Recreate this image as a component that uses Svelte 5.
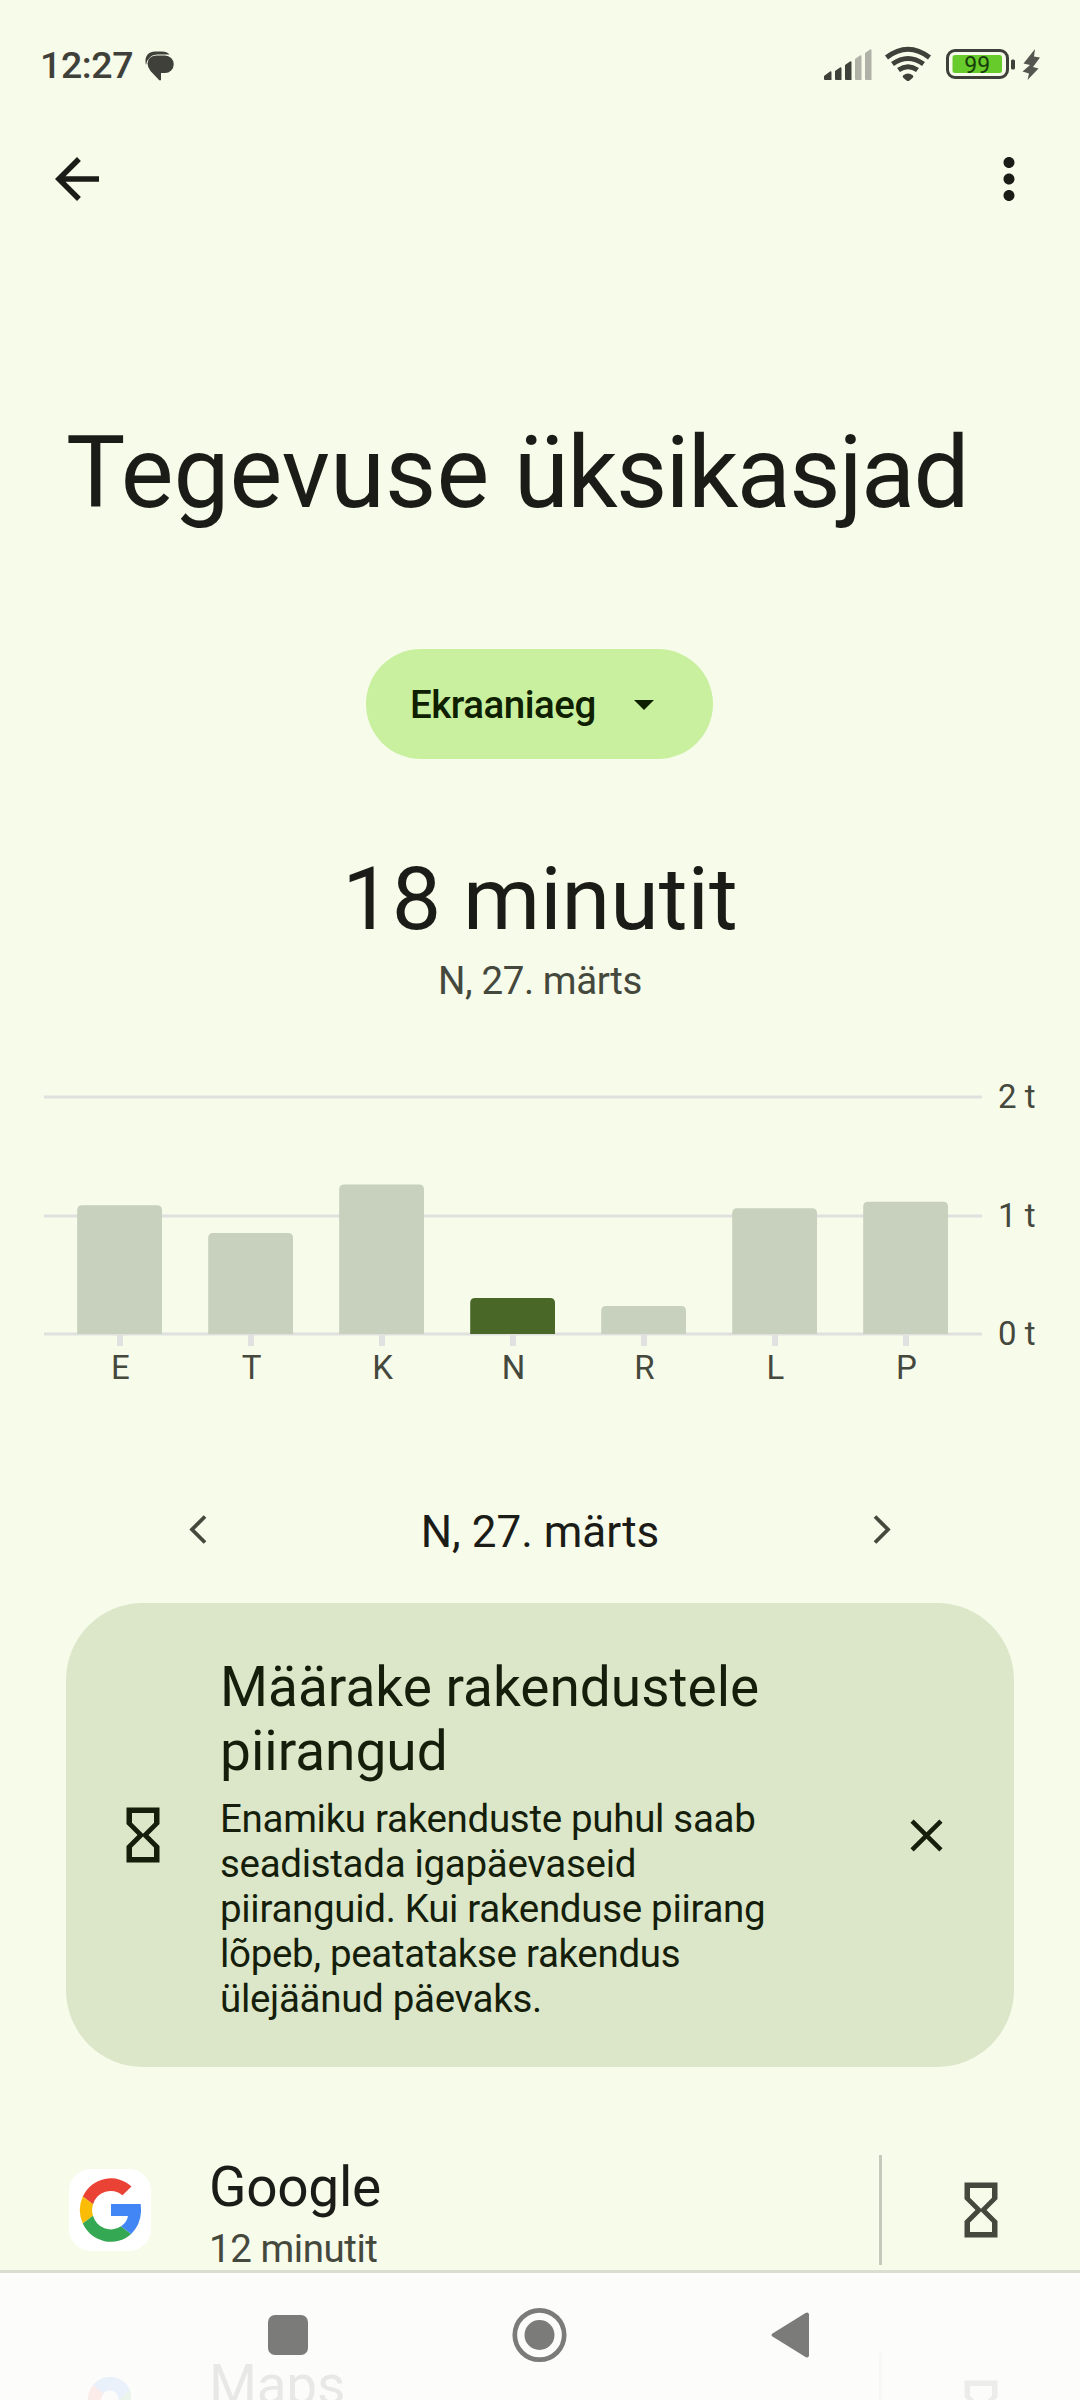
<script>
  const days = [
    { label: 'E', minutes: 65 },
    { label: 'T', minutes: 51 },
    { label: 'K', minutes: 75.5 },
    { label: 'N', minutes: 18.2, active: true },
    { label: 'R', minutes: 14.1 },
    { label: 'L', minutes: 63.5 },
    { label: 'P', minutes: 66.8 }
  ];

  const gridLines = [
    { label: '2 t', y: 31 },
    { label: '1 t', y: 150 },
    { label: '0 t', y: 268 }
  ];

  const baseline = 268;
  const pxPerMinute = 1.98;

  function barPath(index, minutes) {
    const x = 33.2 + index * 131;
    const w = 84.8;
    const h = minutes * pxPerMinute;
    const r = 5;
    return `M${x} ${baseline}v${-(h - r)}q0 ${-r} ${r} ${-r}h${w - 2 * r}q${r} 0 ${r} ${r}v${h - r}z`;
  }

  const apps = [
    { name: 'Google', time: '12 minutit' },
    { name: 'Maps', time: '' }
  ];
</script>

{#snippet hourglass()}
  <svg class="hourglass" viewBox="0 0 24 24">
    <path d="M6 2v6h.01L6 8.01 10 12l-4 4 .01.01H6V22h12v-5.99h-.01L18 16l-4-4 4-3.99-.01-.01H18V2H6zm10 14.5V20H8v-3.5l4-4 4 4zm-4-5l-4-4V4h8v3.5l-4 4z" />
  </svg>
{/snippet}

<div class="screen">
  <!-- Status bar -->
  <header class="status-bar">
    <span class="clock">12:27</span>
    <svg class="chat" width="30" height="30" viewBox="0 0 30 30">
      <path d="M1 14C-1 6 3 .5 10 .5h7q5 0 7.500 3H12Q3 4 1 14z" />
      <path d="M11.500 4.500H20a8.700 8.700 0 0 1 0 17.500h-4v7q-1 .8-2 0L5.500 20Q2.500 16 2.500 12.500a9 8 0 0 1 9-8z" />
    </svg>
    <svg class="signals" width="222" height="36" viewBox="0 0 222 36">
      <path d="M0 30l6-4.500q1.500-.8 1.500 1V34H1q-1 0-1-1zM11 25l5-3.500q1.500-.8 1.500 1V34h-5.500q-1 0-1-1zM21 19l5-3.500q1.500-.8 1.500 1V34h-5.500q-1 0-1-1z" />
      <path class="dim" d="M31 13l5-3.500q1.500-.8 1.500 1V34h-5.500q-1 0-1-1zM41 7l5-3.500q1.500-.8 1.500 1V34h-5.500q-1 0-1-1z" />
      <g class="waves">
        <path d="M62.500 11.500Q84 -5 105.500 11.500" />
        <path d="M68.500 18Q84 7 99.500 18" />
        <path d="M74.500 24Q84 17.500 93.500 24" />
      </g>
      <path d="M79 29.500q5-4 10 0 1 1-.5 2.500l-3 2.500q-1.500 1-3 0l-3-2.500q-1.500-1.500-.5-2.500z" />
      <rect class="battery" x="123.500" y="4.500" width="60" height="27" rx="7.500" />
      <rect class="charge" x="128.500" y="9" width="49.500" height="18" rx="2.500" />
      <rect x="187" y="13.500" width="4" height="10" rx="1.500" />
      <text x="153.200" y="26.500">99</text>
      <path class="bolt" d="M211 3L199.500 17.500l6.500 1.500-7.500 6.500 6.500 2-1.500 6.500 11-11.500-5.500-1.500L216 11.500l-6-1z" />
    </svg>
  </header>

  <!-- App bar -->
  <nav class="app-bar">
    <svg viewBox="0 0 24 24"><path d="M20 11H7.830l5.590-5.590L12 4l-8 8 8 8 1.410-1.410L7.830 13H20v-2z" /></svg>
    <svg viewBox="0 0 24 24"><path d="M12 8c1.100 0 2-.9 2-2s-.9-2-2-2-2 .9-2 2 .9 2 2 2zm0 2c-1.100 0-2 .9-2 2s.9 2 2 2 2-.9 2-2-.9-2-2-2zm0 6c-1.100 0-2 .9-2 2s.9 2 2 2 2-.9 2-2-.9-2-2-2z" /></svg>
  </nav>

  <h1>Tegevuse <span>üksikasjad</span></h1>

  <button class="metric">
    Ekraaniaeg
    <svg width="48" height="48" viewBox="0 0 24 24"><path d="M7 10l5 5 5-5z" /></svg>
  </button>

  <div class="total">18 minutit</div>
  <div class="total-date">N, 27. märts</div>

  <!-- Weekly chart -->
  <svg class="chart" width="1036" height="330" viewBox="0 0 1036 330">
    {#each gridLines as line}
      <line x1="0" x2="938" y1={line.y} y2={line.y} />
      <text x="954" y={line.y + 11}>{line.label}</text>
    {/each}
    {#each days as day, i}
      <path class:active={day.active} d={barPath(i, day.minutes)} />
      <rect x={73 + i * 131} y="269" width="6" height="11" />
      <text class="day" x={76.5 + i * 131} y="313">{day.label}</text>
    {/each}
  </svg>

  <div class="date-nav">
    <svg viewBox="0 0 55 55"><path d="M34 14.500l-13 13 13 13" /></svg>
    <span>N, 27. märts</span>
    <svg viewBox="0 0 55 55"><path d="M21 14.500l13 13-13 13" /></svg>
  </div>

  <!-- Limits card -->
  <section class="card">
    {@render hourglass()}
    <div class="card-text">
      <h2>Määrake rakendustele piirangud</h2>
      <p>Enamiku rakenduste puhul saab seadistada igapäevaseid piiranguid. Kui rakenduse piirang lõpeb, peatatakse rakendus ülejäänud päevaks.</p>
    </div>
    <svg class="close" viewBox="0 0 24 24"><path d="M6.400 19L5 17.600l5.600-5.600L5 6.400 6.400 5l5.600 5.600L17.600 5 19 6.400 13.400 12l5.600 5.600-1.400 1.400-5.600-5.600z" /></svg>
  </section>

  <!-- App list -->
  {#each apps as app}
    <div class="app-row">
      <div class="app-icon">
        {#if app.name === 'Google'}
          <svg width="62" height="64" viewBox="0 0 62 64">
            <path fill="#ea4335" d="M52.500 8.500A31 32 0 0 0 3.800 18.500L14 26.200A18.500 19 0 0 1 43.500 17.300z" />
            <path fill="#fbbc05" d="M3.800 18.500a31 32 0 0 0 0 27L14 37.800a18.500 19 0 0 1 0-11.600z" />
            <path fill="#34a853" d="M3.800 45.500a31 32 0 0 0 48.400 10.500L42 48.200A18.500 19 0 0 1 14 37.800z" />
            <path fill="#4285f4" d="M32 26h29.600q2.500 18-9.400 30L42 48.200q6-4 7-10.200H32z" />
          </svg>
        {:else}
          <svg width="44" height="62" viewBox="0 0 44 62">
            <path fill="#1a73e8" d="M5 8A22 22 0 0 1 29 1L15 18z" />
            <path fill="#4285f4" d="M29 1A22 22 0 0 1 42 13L28 30 15 18z" />
            <path fill="#ea4335" d="M5 8l12 10-14 15A22 22 0 0 1 5 8z" />
            <path fill="#34a853" d="M42 13c6 18-14 26-18 45q-2 4-4 0L10 42z" />
            <path fill="#fbbc04" d="M3 33l14-10 12 5-17 18z" />
            <circle cx="22" cy="22" r="8.500" fill="#fff" />
          </svg>
        {/if}
      </div>
      <div class="app-info">
        <div class="app-name">{app.name}</div>
        <div class="app-time">{app.time}</div>
      </div>
      <div class="divider"></div>
      {@render hourglass()}
    </div>
  {/each}

  <!-- System navigation, drawn over the list -->
  <footer class="system-nav">
    <svg width="1080" height="127" viewBox="0 0 1080 127">
      <rect x="268" y="42" width="40" height="40" rx="7" />
      <circle class="ring" cx="539.500" cy="62" r="24.700" />
      <circle cx="539.500" cy="62" r="15" />
      <path d="M772.500 60.500l33-20.500q3-1.500 3.500 1.500v41q-.5 3-3.500 1.500l-33-20.500q-2-1.500 0-3z" />
    </svg>
  </footer>
</div>

<style>
  :global(body) {
    background: #f7fbea;
  }

  .screen {
    position: relative;
    width: 1080px;
    height: 2400px;
    overflow: hidden;
    display: flex;
    flex-direction: column;
    background: #f7fbea;
    color: #1b1c17;
    font-family: Roboto, sans-serif;
    font-size: 38.5px;
  }

  .screen > * {
    flex-shrink: 0;
  }

  svg {
    display: block;
    flex-shrink: 0;
  }

  /* Status bar */
  .status-bar {
    display: flex;
    align-items: flex-start;
    height: 146px;
    padding: 46px 34px 0 40px;
    box-sizing: border-box;
    color: #3f4039;
    fill: #3f4039;
  }

  .clock {
    margin-top: -1px;
    width: 95px;
    font-size: 37.5px;
    font-weight: 500;
    line-height: 40px;
    letter-spacing: -0.4px;
  }

  .chat {
    margin: 5px 0 0 10px;
  }

  .signals {
    margin-left: auto;
  }

  .dim {
    fill: #b0b2a8;
  }

  .waves {
    fill: none;
    stroke: #3f4039;
    stroke-width: 5;
  }

  .battery {
    fill: none;
    stroke: #3f4039;
    stroke-width: 3;
  }

  .charge {
    fill: #67cb2b;
  }

  .signals text {
    font-size: 23px;
    text-anchor: middle;
    fill: #193c0c;
  }

  .bolt {
    fill: #55564f;
  }

  /* App bar */
  .app-bar {
    display: flex;
    justify-content: space-between;
    padding: 0 38px 0 44px;
    fill: #1b1c17;
  }

  .app-bar svg {
    width: 66px;
    height: 66px;
  }

  h1 {
    margin: 201px 0 0 66px;
    font-size: 99.5px;
    font-weight: 400;
    line-height: 120px;
    letter-spacing: 0.1px;
    white-space: nowrap;
  }

  h1 span {
    letter-spacing: -1.7px;
  }

  .metric {
    display: flex;
    align-items: center;
    justify-content: space-between;
    width: 347px;
    height: 110px;
    margin: 116px 0 0 366px;
    padding: 0 45px 0 44px;
    border: none;
    border-radius: 55px;
    background: #c9f09f;
    color: #0e2000;
    fill: #0e2000;
    font-family: inherit;
    font-size: 38.5px;
    font-weight: 500;
    letter-spacing: -0.5px;
  }

  .total {
    margin-top: 88px;
    font-size: 88px;
    line-height: 104px;
    text-align: center;
  }

  .total-date {
    margin-top: 7px;
    line-height: 45px;
    letter-spacing: -0.4px;
    text-align: center;
    color: #45483d;
  }

  /* Chart */
  .chart {
    margin: 63px 0 0 44px;
    fill: #c8d0be;
  }

  .chart line {
    stroke: #e0e1de;
    stroke-width: 3;
  }

  .chart rect {
    fill: #e0e1e0;
  }

  .chart .active {
    fill: #496727;
  }

  .chart text {
    font-size: 33px;
    fill: #45483d;
  }

  .chart .day {
    text-anchor: middle;
  }

  .date-nav {
    display: flex;
    align-items: center;
    justify-content: space-between;
    height: 64px;
    margin: 101px 171px 0;
    font-size: 44px;
  }

  .date-nav span {
    padding-top: 5px;
  }

  .date-nav svg {
    width: 55px;
    height: 55px;
    fill: none;
    stroke: #45483d;
    stroke-width: 3.8;
  }

  /* Card */
  .card {
    display: flex;
    align-items: center;
    width: 948px;
    height: 464px;
    margin: 42px 0 0 66px;
    padding: 0 60px 0 44px;
    box-sizing: border-box;
    border-radius: 77px;
    background: #dce7c9;
    color: #151e0b;
    fill: #151e0b;
  }

  .hourglass {
    width: 66px;
    height: 66px;
  }

  .card-text {
    width: 560px;
    margin-left: 44px;
    padding-top: 6px;
  }

  h2 {
    margin: 0;
    font-size: 55px;
    font-weight: 400;
    line-height: 64px;
  }

  p {
    margin: 13px 0 0;
    line-height: 45px;
    letter-spacing: -0.31px;
  }

  .close {
    width: 55px;
    height: 55px;
    margin-left: auto;
  }

  /* App list */
  .app-row {
    display: flex;
    align-items: center;
    height: 110px;
    margin-top: 88px;
    padding: 0 66px 0 69px;
    fill: #45483d;
  }

  .app-icon {
    display: flex;
    align-items: center;
    justify-content: center;
    width: 82px;
    height: 82px;
    border-radius: 22px;
    background: #fff;
  }

  .app-info {
    flex: 1;
    align-self: flex-start;
    margin-left: 58px;
  }

  .app-name {
    margin-bottom: 7px;
    font-size: 55px;
    line-height: 64px;
    letter-spacing: -0.3px;
  }

  .app-time {
    line-height: 45px;
    letter-spacing: -0.45px;
    color: #45483d;
  }

  .divider {
    width: 3px;
    height: 110px;
    margin-right: 66px;
    background: #c5c8ba;
  }

  /* System navigation */
  .system-nav {
    position: absolute;
    left: 0;
    bottom: 0;
    border-top: 3px solid #dbddd1;
    background: rgba(252, 252, 251, 0.915);
    background-clip: padding-box;
    fill: #7b7b79;
  }

  .ring {
    fill: none;
    stroke: #7b7b79;
    stroke-width: 4.7;
  }
</style>
